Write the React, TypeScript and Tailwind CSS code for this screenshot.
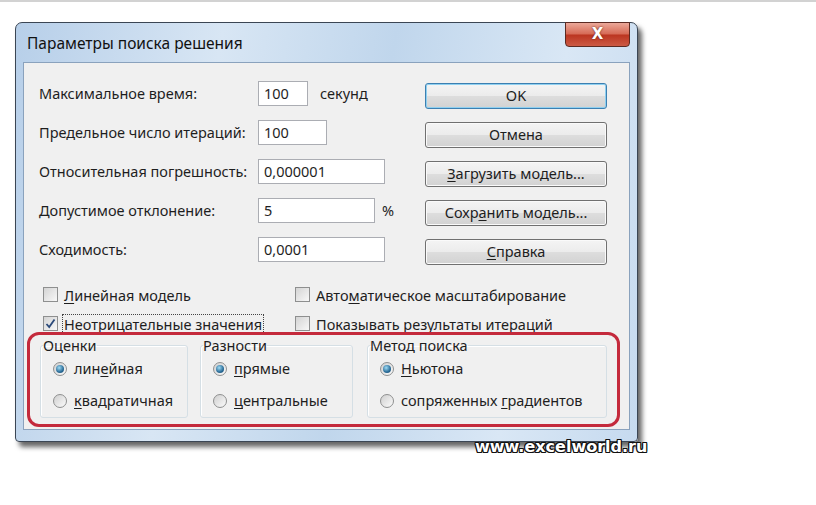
import { ReactNode } from "react";

const Key = ({ children }: { children: ReactNode }) => (
  <span className="underline underline-offset-2">{children}</span>
);

const Field = ({
  label,
  value,
  width,
  suffix,
  gap,
}: {
  label: string;
  value: string;
  width: string;
  suffix?: string;
  gap?: string;
}) => (
  <div className="flex items-center h-[25px]">
    <div className="w-[219px]">{label}</div>
    <div
      className={`${width} h-[25px] bg-white border border-[#abadb3] flex items-center pl-[5px]`}
    >
      {value}
    </div>
    {suffix && <div className={gap}>{suffix}</div>}
  </div>
);

const Button = ({
  children,
  primary,
}: {
  children: ReactNode;
  primary?: boolean;
}) => (
  <div
    className={`h-[26px] rounded-[3px] border flex items-center justify-center bg-[linear-gradient(#f4f4f4_0%,#ececec_48%,#dddddd_52%,#d2d2d2_100%)] ${
      primary
        ? "border-[#3c7fb1] shadow-[inset_0_0_0_1px_#8fd0f0]"
        : "border-[#707070] shadow-[inset_0_0_0_1px_#fafafa]"
    }`}
  >
    {children}
  </div>
);

const Checkbox = ({
  checked,
  children,
  focus,
}: {
  checked?: boolean;
  children: ReactNode;
  focus?: boolean;
}) => (
  <div className="flex items-center h-[29px] gap-[4px]">
    <div className="w-[15px] h-[15px] border border-[#8e8f8f] bg-[linear-gradient(135deg,#d4d4d4,#f8f8f8)] flex items-center justify-center">
      {checked && (
        <svg width="11" height="11" viewBox="0 0 11 11">
          <path
            d="M1.5 6 L4.2 9 L9.5 1.5"
            fill="none"
            stroke="#2b4a7a"
            strokeWidth="1.8"
          />
        </svg>
      )}
    </div>
    <div
      className={`px-[1px] leading-[18px] ${
        focus ? "border border-dotted border-[#444]" : "border border-transparent"
      }`}
    >
      {children}
    </div>
  </div>
);

const Radio = ({
  checked,
  children,
}: {
  checked?: boolean;
  children: ReactNode;
}) => (
  <div className="flex items-center h-[32px] gap-[7px]">
    <div className="w-[14px] h-[14px] rounded-full border border-[#8e8f8f] bg-[linear-gradient(135deg,#cfcfcf,#fbfbfb)] flex items-center justify-center">
      {checked && (
        <div className="w-[8px] h-[8px] rounded-full bg-[radial-gradient(circle_at_40%_35%,#9fdcf5,#2a6c98_60%,#1b4a6e)]" />
      )}
    </div>
    <div>{children}</div>
  </div>
);

const Group = ({
  title,
  width,
  children,
}: {
  title: string;
  width: string;
  children: ReactNode;
}) => (
  <fieldset
    className={`${width} h-[80px] border border-[#d5dfe5] rounded-[3px] shadow-[inset_1px_1px_0_#ffffff] px-[12px] pt-0 pb-0 m-0 min-w-0`}
  >
    <legend className="px-0 ml-[-10px] leading-[14px]">{title}</legend>
    <div className="pt-[1px]">{children}</div>
  </fieldset>
);

export default function App() {
  return (
    <div className="w-[816px] h-[505px] bg-white relative overflow-hidden font-['Noto_Sans',sans-serif] text-[14.5px] text-[#1e1e1e]">
      <div className="h-[2px] bg-[#d2d2d2]" />
      <div className="pl-[15px] pt-[20px]">
        <div className="w-[623px] h-[420px] rounded-t-[7px] rounded-b-[4px] border border-[#3b4654] bg-[linear-gradient(100deg,#b7cfe9_0%,#d8e6f4_30%,#c0d6ec_55%,#d9e7f5_80%,#c6daef_100%)] shadow-[4px_5px_5px_rgba(0,0,0,0.6)] flex flex-col px-[7px] pb-[11px]">
          <div className="h-[39px] flex justify-between">
            <div className="pl-[4px] pt-[9px] text-[15.5px] text-[#111]">
              Параметры поиска решения
            </div>
            <div className="w-[65px] h-[25px] -mt-px rounded-b-[4px] border border-[#5b2a22] bg-[linear-gradient(#eba899,#d66a55_48%,#bb3520_52%,#cc5a44_100%)] flex items-center justify-center text-white font-bold text-[15px] font-['DejaVu_Sans',sans-serif] [text-shadow:0_0_2px_#5a1a10]">
              X
            </div>
          </div>
          <div className="flex-1 bg-[#f0f0f0] border border-[#8aa2bd] relative px-[15px] pt-[18px]">
            <div className="flex">
              <div className="w-[386px] flex flex-col gap-[14px]">
                <Field
                  label="Максимальное время:"
                  value="100"
                  width="w-[50px]"
                  suffix="секунд"
                  gap="ml-[12px]"
                />
                <Field
                  label="Предельное число итераций:"
                  value="100"
                  width="w-[69px]"
                />
                <Field
                  label="Относительная погрешность:"
                  value="0,000001"
                  width="w-[127px]"
                />
                <Field
                  label="Допустимое отклонение:"
                  value="5"
                  width="w-[117px]"
                  suffix="%"
                  gap="ml-[7px]"
                />
                <Field
                  label="Сходимость:"
                  value="0,0001"
                  width="w-[127px]"
                />
              </div>
              <div className="w-[182px] pt-[2px] flex flex-col gap-[13px]">
                <Button primary>OK</Button>
                <Button>Отмена</Button>
                <Button>
                  <Key>З</Key>агрузить модель...
                </Button>
                <Button>
                  Сохр<Key>а</Key>нить модель...
                </Button>
                <Button>
                  <Key>С</Key>правка
                </Button>
              </div>
            </div>

            <div className="mt-[15px] pl-[4px] grid grid-cols-[252px_1fr]">
              <Checkbox>
                <Key>Л</Key>инейная модель
              </Checkbox>
              <Checkbox>
                Авто<Key>м</Key>атическое масштабирование
              </Checkbox>
              <Checkbox checked focus>
                Неотрицательн<Key>ы</Key>е значения
              </Checkbox>
              <Checkbox>
                Показывать <Key>р</Key>езультаты итераций
              </Checkbox>
            </div>

            <div className="flex pl-[1px] gap-[12px]">
              <Group title="Оценки" width="w-[148px]">
                <Radio checked>
                  лин<Key>е</Key>йная
                </Radio>
                <Radio>
                  <Key>к</Key>вадратичная
                </Radio>
              </Group>
              <Group title="Разности" width="w-[153px]">
                <Radio checked>
                  <Key>п</Key>рямые
                </Radio>
                <Radio>
                  <Key>ц</Key>ентральные
                </Radio>
              </Group>
              <Group title="Метод поиска" width="w-[240px] ml-[2px]">
                <Radio checked>
                  <Key>Н</Key>ьютона
                </Radio>
                <Radio>
                  сопряженных <Key>г</Key>радиентов
                </Radio>
              </Group>
            </div>

            <div className="absolute left-[3px] top-[269px] w-[593px] h-[95px] border-[3px] border-[#c42a3c] rounded-[12px] pointer-events-none" />
          </div>
        </div>
      </div>
      <div className="absolute left-[475px] top-[435px] font-['DejaVu_Sans',sans-serif] font-bold text-[16px] text-white tracking-[0px] [text-shadow:1px_1px_0_#111,-1px_-1px_0_#111,1px_-1px_0_#111,-1px_1px_0_#111,0_1px_0_#111,0_-1px_0_#111,1px_0_0_#111,-1px_0_0_#111]">
        www.excelworld.ru
      </div>
    </div>
  );
}
